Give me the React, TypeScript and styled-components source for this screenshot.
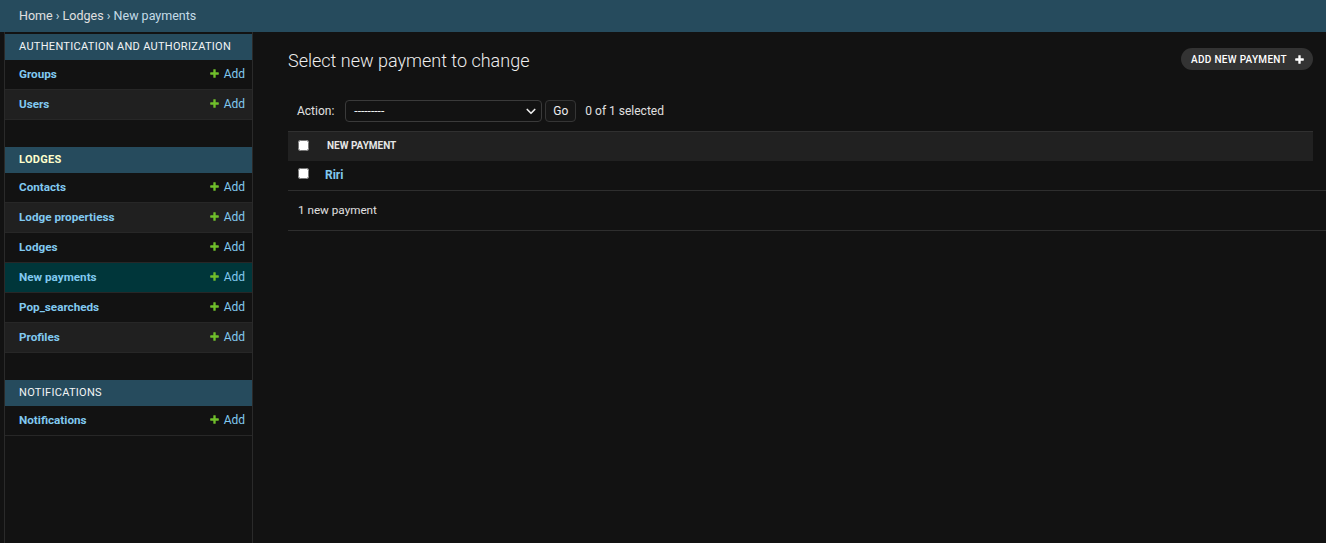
import React from "react";
import styled, { createGlobalStyle } from "styled-components";

const GlobalStyle = createGlobalStyle`
  html, body { margin: 0; padding: 0; background: #121212; }
  body { font-family: Roboto, "Liberation Sans", Arial, sans-serif; color: #eeeeee; }
  * { box-sizing: border-box; }
  a { text-decoration: none; }
`;

const Page = styled.div`
  display: flex;
  flex-direction: column;
  height: 543px;
  overflow: hidden;
`;

const Breadcrumbs = styled.nav`
  flex: none;
  height: 32px;
  background: #264b5d;
  display: flex;
  align-items: center;
  padding: 0 19px 2px;
  font-size: 12.5px;
  color: #c4dce8;
  white-space: pre;
`;

const Crumb = styled.a`
  color: #e0e0e0;
`;

const Body = styled.div`
  flex: 1;
  display: flex;
  min-height: 0;
`;

const Toggle = styled.div`
  flex: none;
  width: 5px;
  border-right: 1px solid #2a2a2a;
`;

const Sidebar = styled.aside`
  flex: none;
  width: 248px;
  border-right: 1px solid #2a2a2a;
  padding-top: 2px;
`;

const Module = styled.div`
  margin-bottom: 27px;
`;

const Caption = styled.div<{ $current?: boolean }>`
  height: 26px;
  background: #264b5d;
  display: flex;
  align-items: center;
  padding: 0 0 1px 14px;
  font-size: 11px;
  letter-spacing: 0.3px;
  text-transform: uppercase;
  color: ${(p) => (p.$current ? "#ffffcc" : "#f2f4f5")};
  font-weight: ${(p) => (p.$current ? 700 : 400)};
`;

const NavRow = styled.div<{ $tone: "plain" | "alt" | "selected" }>`
  height: 30px;
  display: flex;
  align-items: center;
  justify-content: space-between;
  padding: 0 7px 2px 14px;
  border-bottom: 1px solid #272727;
  background: ${(p) =>
    p.$tone === "selected" ? "#00363a" : p.$tone === "alt" ? "#202020" : "#121212"};
`;

const NavLink = styled.a`
  color: #81c9f0;
  font-size: 11.7px;
  font-weight: 700;
`;

const AddLink = styled.a`
  display: flex;
  align-items: center;
  gap: 4px;
  color: #81c9f0;
  font-size: 12px;
`;

const Main = styled.main`
  flex: 1;
  min-width: 0;
  padding: 16px 13px 0 35px;
`;

const HeaderRow = styled.div`
  display: flex;
  justify-content: space-between;
  align-items: flex-start;
`;

const Title = styled.h1`
  margin: 0;
  font-size: 18px;
  line-height: 26px;
  font-weight: 300;
  color: #eeeeee;
`;

const ObjectTool = styled.a`
  height: 22px;
  display: flex;
  align-items: center;
  gap: 7px;
  padding: 0 8px 0 10px;
  border-radius: 11px;
  background: #333333;
  color: #ffffff;
  font-size: 10px;
  font-weight: 500;
  letter-spacing: 0.3px;
  text-transform: uppercase;
`;

const Actions = styled.div`
  margin-top: 26px;
  height: 22px;
  display: flex;
  align-items: center;
  padding-left: 9px;
  font-size: 12px;
  color: #e0e0e0;
`;

const ActionLabel = styled.label`
  margin-right: 11px;
`;

const SelectBox = styled.div`
  width: 197px;
  height: 22px;
  border: 1px solid #3a3a3a;
  border-radius: 4px;
  background: #121212;
  display: flex;
  align-items: center;
  justify-content: space-between;
  padding: 0 4px 0 8px;
  color: #eeeeee;
  font-size: 12px;
`;

const GoButton = styled.button`
  margin-left: 3px;
  width: 31px;
  height: 22px;
  border: 1px solid #353535;
  border-radius: 4px;
  background: #161616;
  color: #eeeeee;
  font-family: inherit;
  font-size: 12px;
  padding: 0;
`;

const Counter = styled.span`
  margin-left: 9px;
`;

const Table = styled.table`
  margin-top: 9px;
  width: 100%;
  border-collapse: collapse;
`;

const HeadRow = styled.tr`
  height: 29px;
  background: #212121;
  border-top: 1px solid #303030;
`;

const CheckCell = styled.td<{ $body?: boolean }>`
  width: 30px;
  padding: 0 0 ${(p) => (p.$body ? "3px" : "1px")} 10px;
  vertical-align: middle;
`;

const HeadCell = styled.th`
  text-align: left;
  padding: 0 0 1px 9px;
  font-size: 10px;
  font-weight: 700;
  text-transform: uppercase;
  color: #e6e6e6;
`;

const BodyRow = styled.tr`
  height: 29px;
`;

const BodyCell = styled.th`
  text-align: left;
  padding: 0 0 3px 7px;
`;

const RowLink = styled.a`
  color: #81c9f0;
  font-size: 12px;
  font-weight: 700;
`;

const Check = styled.input`
  display: block;
  width: 11px;
  height: 11px;
  margin: 0;
`;

const Paginator = styled.div`
  margin-right: -13px;
  height: 41px;
  border-top: 1px solid #2e2e2e;
  border-bottom: 1px solid #2e2e2e;
  display: flex;
  align-items: center;
  padding: 0 0 1px 10px;
  font-size: 11.7px;
  color: #e0e0e0;
`;

const PlusIcon = ({ color, size }: { color: string; size: number }) => (
  <svg width={size} height={size} viewBox="0 0 1792 1792" aria-hidden="true">
    <path
      fill={color}
      d="M1600 796v192q0 40-28 68t-68 28h-416v416q0 40-28 68t-68 28h-192q-40 0-68-28t-28-68v-416h-416q-40 0-68-28t-28-68v-192q0-40 28-68t68-28h416v-416q0-40 28-68t68-28h192q40 0 68 28t28 68v416h416q40 0 68 28t28 68z"
    />
  </svg>
);

const Chevron = () => (
  <svg width="12" height="12" viewBox="0 0 16 16" aria-hidden="true">
    <path d="M3 6l5 5 5-5" fill="none" stroke="#eeeeee" strokeWidth="2.2" strokeLinecap="round" strokeLinejoin="round" />
  </svg>
);

type NavItem = { name: string; tone?: "plain" | "alt" | "selected" };
type NavModule = { title: string; current?: boolean; items: NavItem[] };

const modules: NavModule[] = [
  { title: "Authentication and Authorization", items: [{ name: "Groups" }, { name: "Users" }] },
  {
    title: "Lodges",
    current: true,
    items: [
      { name: "Contacts" },
      { name: "Lodge propertiess" },
      { name: "Lodges" },
      { name: "New payments", tone: "selected" },
      { name: "Pop_searcheds" },
      { name: "Profiles" },
    ],
  },
  { title: "Notifications", items: [{ name: "Notifications" }] },
];

export default function App() {
  return (
    <Page>
      <GlobalStyle />
      <Breadcrumbs>
        <Crumb href="#">Home</Crumb>
        {" › "}
        <Crumb href="#">Lodges</Crumb>
        {" › New payments"}
      </Breadcrumbs>
      <Body>
        <Toggle />
        <Sidebar>
          {modules.map((m) => (
            <Module key={m.title}>
              <Caption $current={m.current}>{m.title}</Caption>
              {m.items.map((it, i) => (
                <NavRow key={it.name} $tone={it.tone ?? (i % 2 === 1 ? "alt" : "plain")}>
                  <NavLink href="#">{it.name}</NavLink>
                  <AddLink href="#">
                    <PlusIcon color="#70bf2b" size={11} />
                    Add
                  </AddLink>
                </NavRow>
              ))}
            </Module>
          ))}
        </Sidebar>
        <Main>
          <HeaderRow>
            <Title>Select new payment to change</Title>
            <ObjectTool href="#">
              Add new payment
              <PlusIcon color="#ffffff" size={11} />
            </ObjectTool>
          </HeaderRow>
          <Actions>
            <ActionLabel>Action:</ActionLabel>
            <SelectBox>
              <span>---------</span>
              <Chevron />
            </SelectBox>
            <GoButton type="button">Go</GoButton>
            <Counter>0 of 1 selected</Counter>
          </Actions>
          <Table>
            <thead>
              <HeadRow>
                <CheckCell>
                  <Check type="checkbox" />
                </CheckCell>
                <HeadCell>New payment</HeadCell>
              </HeadRow>
            </thead>
            <tbody>
              <BodyRow>
                <CheckCell $body>
                  <Check type="checkbox" />
                </CheckCell>
                <BodyCell>
                  <RowLink href="#">Riri</RowLink>
                </BodyCell>
              </BodyRow>
            </tbody>
          </Table>
          <Paginator>1 new payment</Paginator>
        </Main>
      </Body>
    </Page>
  );
}
